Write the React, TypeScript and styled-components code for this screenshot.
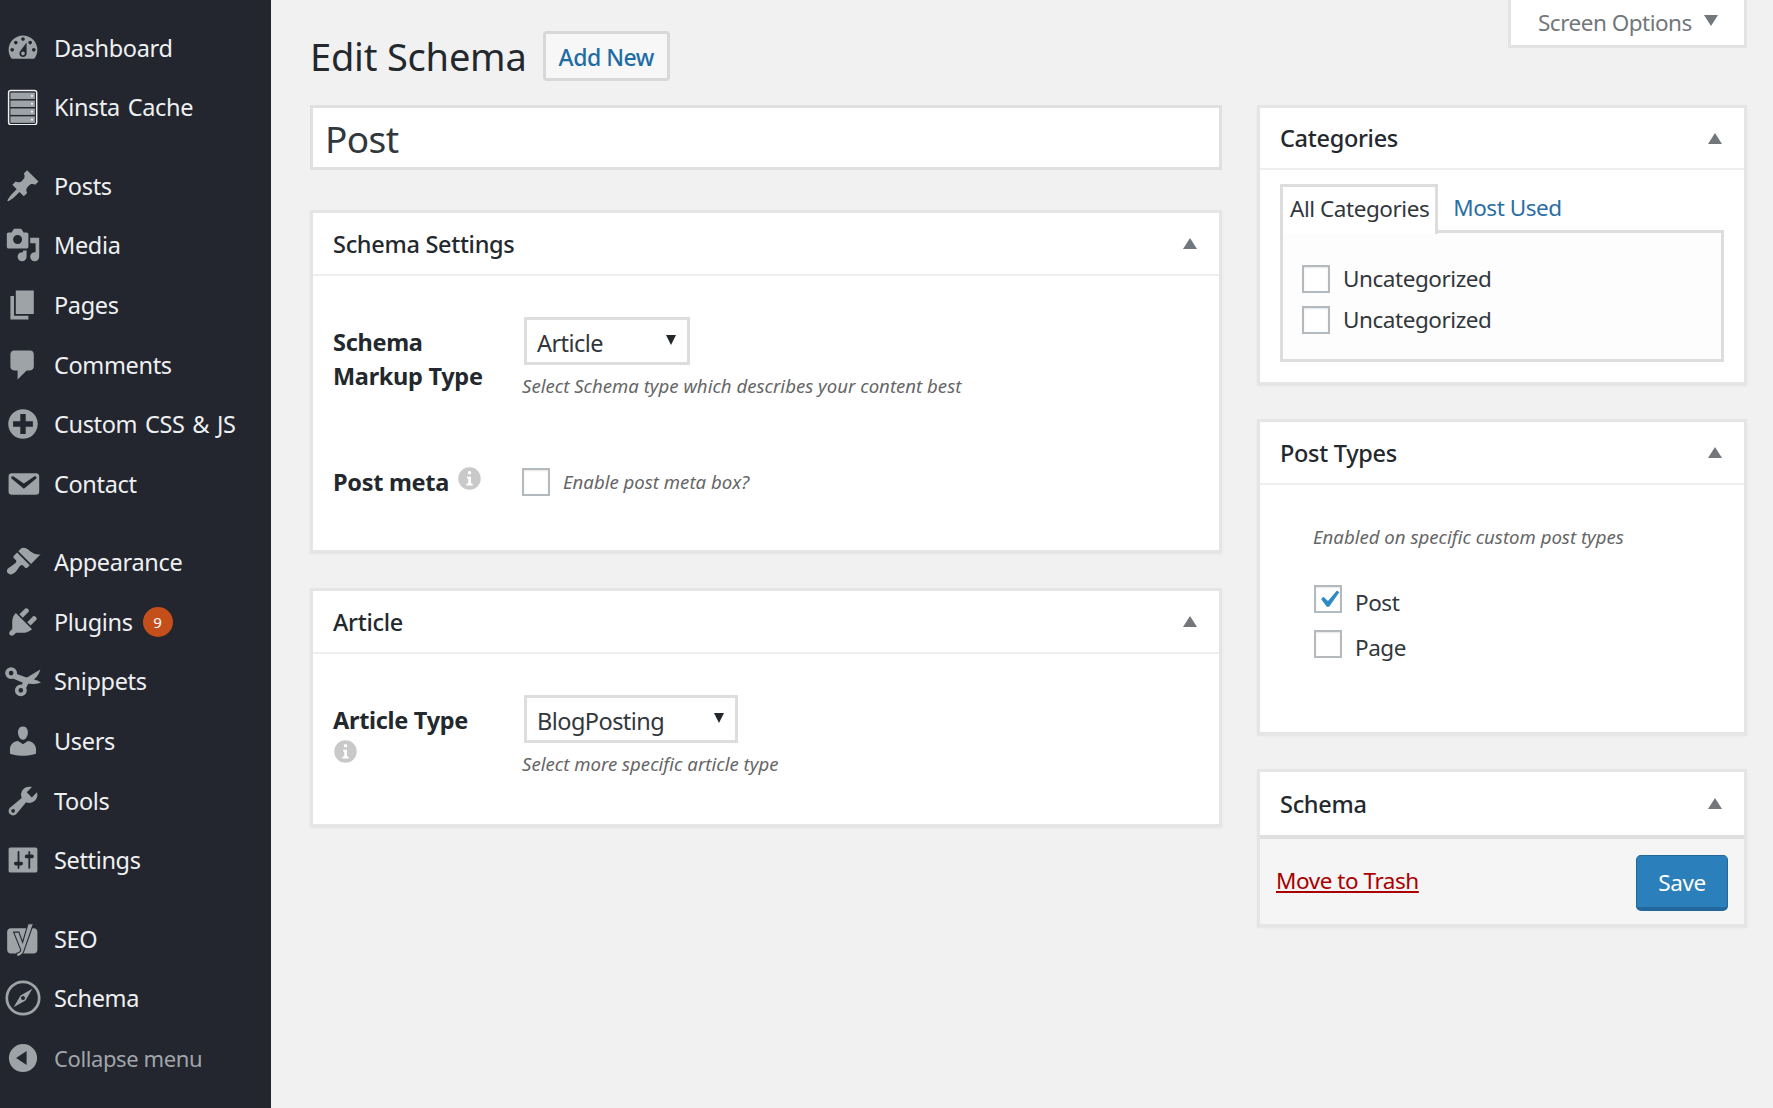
import { FC, ReactNode } from "react";
import styled, { createGlobalStyle } from "styled-components";

const GlobalStyle = createGlobalStyle`
  html, body {
    margin: 0;
    padding: 0;
    height: 100%;
    overflow: hidden;
    background: #f1f1f1;
    font-family: "Noto Sans", "Open Sans", sans-serif;
    color: #23282d;
  }
  * { box-sizing: border-box; }
`;

const Page = styled.div`
  display: flex;
  width: 1773px;
  height: 1108px;
  overflow: hidden;
`;

const Sidebar = styled.nav`
  flex: 0 0 271px;
  background: #23262e;
  padding-top: 18px;
`;

const MenuItem = styled.div<{ $gap?: boolean; $dim?: boolean }>`
  display: flex;
  align-items: center;
  height: 59.6px;
  margin-top: ${(p) => (p.$gap ? "18.8px" : "0")};
  color: ${(p) => (p.$dim ? "#a0a5aa" : "#eef0f2")};
  font-size: ${(p) => (p.$dim ? "22px" : "23.5px")};
  letter-spacing: ${(p) => (p.$dim ? "-0.4px" : "-0.35px")};
  word-spacing: ${(p) => (p.$dim ? "0" : "2px")};
  white-space: nowrap;
`;

const MenuIcon = styled.span`
  flex: 0 0 54px;
  display: flex;
  justify-content: center;
  padding-right: 8px;
  color: #9ea3a8;
  svg {
    display: block;
    width: 36px;
    height: 36px;
    fill: currentColor;
  }
`;

const Badge = styled.span`
  display: inline-flex;
  align-items: center;
  justify-content: center;
  width: 30px;
  height: 30px;
  margin-left: 10px;
  border-radius: 50%;
  background: #c54f1b;
  color: #fff;
  font-size: 15px;
  letter-spacing: 0;
`;

const Content = styled.main`
  flex: 1;
  padding: 0 26px 0 39px;
`;

const TopRow = styled.div`
  display: flex;
  justify-content: space-between;
  align-items: flex-start;
  height: 105px;
`;

const TitleRow = styled.div`
  display: flex;
  align-items: center;
  gap: 16px;
  padding-top: 31px;
`;

const Title = styled.h1`
  margin: 0;
  font-size: 38px;
  line-height: 48px;
  font-weight: 400;
  letter-spacing: -0.2px;
  color: #23282d;
`;

const AddNew = styled.a`
  display: flex;
  align-items: center;
  height: 50px;
  padding: 2px 13px 0;
  background: #f7f7f7;
  border: 3px solid #d8d8d8;
  border-radius: 4px;
  color: #1f6ca5;
  font-size: 23px;
  font-weight: 500;
  letter-spacing: -0.5px;
`;

const ScreenOptions = styled.div`
  display: flex;
  align-items: center;
  gap: 12px;
  width: 239px;
  height: 48px;
  padding-left: 27px;
  background: #fff;
  border: 3px solid #e3e3e3;
  border-top: 0;
  color: #72777c;
  font-size: 22.5px;
  letter-spacing: -0.5px;
`;

const OptionsArrow = styled.span`
  width: 0;
  height: 0;
  margin-bottom: 5px;
  border-left: 7px solid transparent;
  border-right: 7px solid transparent;
  border-top: 11px solid #72777c;
`;

const Columns = styled.div`
  display: flex;
  align-items: flex-start;
  gap: 35px;
`;

const MainColumn = styled.div`
  flex: 0 0 912px;
`;

const SideColumn = styled.div`
  flex: 0 0 490px;
`;

const TitleInput = styled.div`
  display: flex;
  align-items: center;
  height: 65px;
  margin-bottom: 40px;
  padding: 2px 12px 0 12px;
  background: #fff;
  border: 3px solid #e0e0e0;
  font-size: 37px;
  letter-spacing: -0.6px;
  color: #32373c;
`;

const BoxFrame = styled.section<{ $height: number; $gap?: number }>`
  display: flex;
  flex-direction: column;
  height: ${(p) => p.$height}px;
  margin-bottom: ${(p) => p.$gap ?? 35}px;
  background: #fff;
  border: 3px solid #e5e5e5;
  box-shadow: 0 1px 2px rgba(0, 0, 0, 0.06);
`;

const BoxHeader = styled.header<{ $height: number; $strong?: boolean }>`
  flex: 0 0 ${(p) => p.$height}px;
  display: flex;
  align-items: center;
  justify-content: space-between;
  padding: 0 22px 0 20px;
  border-bottom: ${(p) => (p.$strong ? "4px solid #dfdfdf" : "2px solid #eeeeee")};
  font-size: 23.5px;
  font-weight: 500;
  letter-spacing: -0.3px;
  color: #23282d;
`;

const Toggle = styled.span`
  width: 0;
  height: 0;
  border-left: 7px solid transparent;
  border-right: 7px solid transparent;
  border-bottom: 11px solid #72777c;
`;

const BoxBody = styled.div`
  flex: 1;
  display: flex;
  flex-direction: column;
  padding: 0 20px;
`;

const FieldRow = styled.div<{ $top: number }>`
  display: grid;
  grid-template-columns: 189px 1fr;
  margin-top: ${(p) => p.$top}px;
`;

const FieldLabel = styled.div<{ $pad?: number }>`
  padding-top: ${(p) => p.$pad ?? 8}px;
  font-size: 23.5px;
  font-weight: 700;
  line-height: 34px;
  letter-spacing: -0.3px;
  color: #23282d;
`;

const SelectBox = styled.div<{ $width: number }>`
  display: flex;
  align-items: center;
  justify-content: space-between;
  width: ${(p) => p.$width}px;
  height: 48px;
  margin-left: 2px;
  padding: 3px 11px 0 10px;
  background: #fff;
  border: 3px solid #dddddd;
  font-size: 23.5px;
  letter-spacing: -0.55px;
  color: #32373c;
`;

const SelectArrow = styled.span`
  width: 0;
  height: 0;
  margin-bottom: 6px;
  border-left: 5px solid transparent;
  border-right: 5px solid transparent;
  border-top: 10px solid #23282d;
`;

const Hint = styled.p<{ $indent?: number; $top?: number }>`
  margin: ${(p) => p.$top ?? 8}px 0 0;
  padding-left: ${(p) => p.$indent ?? 0}px;
  font-size: 18.6px;
  line-height: 26px;
  font-style: italic;
  color: #666;
`;

const CheckRow = styled.label`
  display: flex;
  align-items: center;
  gap: 13px;
`;

const CheckBox = styled.span`
  flex: 0 0 28px;
  display: flex;
  align-items: center;
  justify-content: center;
  width: 28px;
  height: 28px;
  background: #fff;
  border: 2.5px solid #b4b9be;
  box-shadow: inset 0 1px 2px rgba(0, 0, 0, 0.1);
  svg {
    display: block;
    flex: none;
    width: 35px;
    height: 35px;
    fill: #2e8bc6;
  }
`;

const CheckText = styled.span<{ $drop?: number }>`
  padding-top: ${(p) => p.$drop ?? 0}px;
  font-size: 22.5px;
  letter-spacing: -0.45px;
  color: #32373c;
`;

const InfoIcon = styled.svg<{ $block?: boolean }>`
  display: ${(p) => (p.$block ? "block" : "inline-block")};
  width: 25px;
  height: 25px;
  margin: ${(p) => (p.$block ? "2px 0 0" : "0 0 0 8px")};
  vertical-align: 0;
  fill: #c9c9c9;
`;

const Tabs = styled.div`
  display: flex;
  align-items: stretch;
  height: 46px;
  margin-top: 14px;
`;

const ActiveTab = styled.div`
  display: flex;
  align-items: center;
  position: relative;
  z-index: 1;
  height: 50px;
  padding: 0 6px 4px 7px;
  background: #fff;
  border: 3px solid #dddddd;
  border-bottom: 0;
  font-size: 22.5px;
  letter-spacing: -0.45px;
  color: #32373c;
`;

const PlainTab = styled.a`
  display: flex;
  align-items: center;
  padding: 0 0 0 15px;
  font-size: 22.5px;
  letter-spacing: -0.45px;
  color: #2a6ea4;
`;

const TabPanel = styled.div`
  display: flex;
  flex-direction: column;
  gap: 10px;
  height: 132px;
  padding: 30px 18px 0 19px;
  background: #fdfdfd;
  border: 3px solid #dddddd;
`;

const TypeList = styled.div`
  display: flex;
  flex-direction: column;
  gap: 7px;
  margin-top: 30px;
  padding-left: 34px;
`;

const Footer = styled.div`
  flex: 1;
  display: flex;
  align-items: center;
  justify-content: space-between;
  padding: 2px 16px 0 16px;
  background: #f5f5f5;
`;

const TrashLink = styled.a`
  margin-bottom: 5px;
  color: #a00;
  font-size: 22.5px;
  letter-spacing: -0.45px;
  text-decoration: underline;
`;

const SaveButton = styled.button`
  width: 92px;
  height: 56px;
  padding: 3px 0 0;
  background: #2b7fba;
  border: 1px solid #23679b;
  border-bottom-width: 4px;
  border-radius: 5px;
  color: #fff;
  font-family: inherit;
  font-size: 22.5px;
  letter-spacing: -0.45px;
`;

const Icon: FC<{ d: string }> = ({ d }) => (
  <svg viewBox="0 0 20 20">
    <path d={d} />
  </svg>
);

const CacheIcon = () => (
  <svg viewBox="0 0 20 20">
    <rect x="2" y="0.8" width="15.6" height="19" rx="1.2" fill="none" stroke="#eef0f2" strokeWidth="0.8" />
    <rect x="3" y="2" width="13.6" height="3.6" />
    <rect x="3" y="6.4" width="13.6" height="3.6" />
    <rect x="3" y="10.8" width="13.6" height="3.6" />
    <rect x="3" y="15.2" width="13.6" height="3.6" />
    <circle cx="15" cy="3.8" r="0.6" fill="#eef0f2" />
    <circle cx="15" cy="8.2" r="0.6" fill="#eef0f2" />
    <circle cx="15" cy="12.6" r="0.6" fill="#eef0f2" />
    <circle cx="15" cy="17" r="0.6" fill="#eef0f2" />
  </svg>
);

const ScissorsIcon = () => (
  <svg viewBox="0 0 20 20">
    <circle cx="3.4" cy="5.6" r="2.3" fill="none" stroke="currentColor" strokeWidth="2" />
    <circle cx="8.8" cy="15.2" r="2.3" fill="none" stroke="currentColor" strokeWidth="2" />
    <path d="M9 13 10.600 9 19.600 3.600C19 6.800 16.400 9.400 13.200 10.800L11.600 14.200z" />
    <path d="M5 5.600 12 8C15 8.900 18 9.200 20 10.800 16.500 12 13 11.700 10 11L4.400 8.600z" />
  </svg>
);

const YoastIcon = () => (
  <svg viewBox="0 0 20 20">
    <rect x="1.2" y="4" width="16.800" height="14" rx="2.200" />
    <path
      d="M4.800 6.200h2.900l2.100 5.600L12.800 1.500h3L10.400 17c-.7 1.800-1.800 2.600-3.900 2.800v-1.900c1.200-.1 1.800-.5 2.300-1.700z"
      stroke="#23262e"
      strokeWidth="0.6"
    />
  </svg>
);

const CompassIcon = () => (
  <svg viewBox="0 0 20 20">
    <circle cx="10" cy="10" r="9" fill="none" stroke="currentColor" strokeWidth="1.500" />
    <path d="M15.200 4.800 11.400 11.400 4.800 15.200 8.600 8.600zM10 8.900a1.100 1.100 0 1 0 .01 0z" fillRule="evenodd" />
  </svg>
);

const Info: FC<{ block?: boolean }> = ({ block }) => (
  <InfoIcon $block={block} viewBox="0 0 20 20">
    <path d="M10 1a9 9 0 1 0 0 18 9 9 0 0 0 0-18zm0 3a1.400 1.400 0 1 1 0 2.800A1.400 1.400 0 0 1 10 4zM8 8.500h3.200V14H12.500v1.500h-5V14H9V10H8z" fillRule="evenodd" />
  </InfoIcon>
);

const Check: FC<{ checked?: boolean }> = ({ checked }) => (
  <CheckBox>
    {checked && (
      <svg viewBox="0 0 20 20">
        <path d="M14.830 4.890l1.340.940-5.810 8.380H9.020L5.780 9.670l1.340-1.250 2.570 2.400z" />
      </svg>
    )}
  </CheckBox>
);

const Box: FC<{
  title: string;
  height: number;
  header: number;
  gap?: number;
  strong?: boolean;
  children: ReactNode;
}> = ({ title, height, header, gap, strong, children }) => (
  <BoxFrame $height={height} $gap={gap}>
    <BoxHeader $height={header} $strong={strong}>
      {title}
      <Toggle />
    </BoxHeader>
    {children}
  </BoxFrame>
);

const menu: { label: string; icon: ReactNode; gap?: boolean; dim?: boolean; badge?: string }[] = [
  {
    label: "Dashboard",
    icon: <Icon d="M3.760 16h12.480c1.100-1.370 1.760-3.110 1.760-5 0-4.420-3.580-8-8-8s-8 3.580-8 8c0 1.890.660 3.630 1.760 5zM10 4c.550 0 1 .450 1 1s-.450 1-1 1-1-.450-1-1 .450-1 1-1zM6 6c.550 0 1 .450 1 1s-.450 1-1 1-1-.450-1-1 .450-1 1-1zm8 0c.550 0 1 .450 1 1s-.450 1-1 1-1-.450-1-1 .450-1 1-1zm-5.370 5.550L12 7v6c0 1.100-.900 2-2 2s-2-.900-2-2c0-.570.240-1.080.630-1.450zM4 10c.550 0 1 .450 1 1s-.450 1-1 1-1-.450-1-1 .450-1 1-1zm12 0c.550 0 1 .450 1 1s-.450 1-1 1-1-.450-1-1 .450-1 1-1zm-5 3c0-.550-.450-1-1-1s-1 .450-1 1 .450 1 1 1 1-.450 1-1z" />,
  },
  { label: "Kinsta Cache", icon: <CacheIcon /> },
  {
    label: "Posts",
    gap: true,
    icon: <Icon d="M10.440 3.020l1.820-1.820 6.360 6.350-1.830 1.820c-1.050-.680-2.480-.570-3.410.360l-.750.750c-.920.930-1.040 2.350-.350 3.410l-1.830 1.820-2.410-2.410-2.800 2.790c-.420.420-3.380 2.710-3.800 2.290s1.860-3.390 2.280-3.810l2.790-2.790L4.100 9.360l1.830-1.820c1.050.690 2.480.570 3.400-.360l.750-.750c.930-.920 1.050-2.350.360-3.410z" />,
  },
  {
    label: "Media",
    icon: <Icon d="M13 11V4c0-.550-.450-1-1-1h-1.670L9 1H5L3.670 3H2c-.550 0-1 .450-1 1v7c0 .550.450 1 1 1h10c.550 0 1-.450 1-1zM7 4.500c1.380 0 2.500 1.120 2.500 2.500S8.380 9.500 7 9.500 4.500 8.380 4.500 7 5.620 4.500 7 4.500zM14 6h5v10.500c0 1.380-1.120 2.500-2.500 2.500S14 17.880 14 16.500s1.120-2.500 2.500-2.500c.170 0 .340.020.500.050V9h-3V6zm-4 8.050V13h2v3.500c0 1.380-1.120 2.500-2.500 2.500S7 17.880 7 16.500 8.120 14 9.500 14c.170 0 .340.020.500.050z" />,
  },
  { label: "Pages", icon: <Icon d="M6 15V2h10v13H6zm-1 1h8v2H3V5h2v11z" /> },
  {
    label: "Comments",
    icon: <Icon d="M5 2h9c1.100 0 2 .900 2 2v7c0 1.100-.900 2-2 2h-2l-5 5v-5H5c-1.100 0-2-.900-2-2V4c0-1.100.900-2 2-2z" />,
  },
  {
    label: "Custom CSS & JS",
    icon: <Icon d="M15.800 4.200c3.200 3.210 3.200 8.390 0 11.600-3.210 3.200-8.390 3.200-11.600 0C1 12.590 1 7.410 4.200 4.200 7.410 1 12.590 1 15.800 4.200zm-4.300 11.300v-4h4v-3h-4v-4h-3v4h-4v3h4v4h3z" />,
  },
  {
    label: "Contact",
    icon: <Icon d="M3.870 4h13.250C18.370 4 19 4.590 19 5.790v8.420c0 1.190-.630 1.790-1.880 1.790H3.870c-1.250 0-1.880-.600-1.880-1.790V5.790c0-1.200.630-1.790 1.880-1.790zm6.620 8.600l6.740-5.530c.240-.200.430-.660.130-1.070-.290-.410-.820-.420-1.170-.170l-5.700 3.860L4.800 5.830c-.350-.250-.880-.240-1.170.170-.300.410-.110.870.130 1.070z" />,
  },
  {
    label: "Appearance",
    gap: true,
    icon: <Icon d="M14.480 11.060L7.410 3.990l1.500-1.500c.500-.560 2.300-.470 3.510.320 1.210.800 1.430 1.280 2.910 2.100 1.180.640 2.450 1.260 4.450.850zm-.710.710L6.700 4.700 4.930 6.470c-.390.390-.390 1.020 0 1.410l1.060 1.060c.390.390.390 1.030 0 1.420-.600.600-1.430 1.110-2.210 1.690-.350.260-.700.530-1.010.840C1.430 13.230.400 14.980 1.700 16.280c1.300 1.300 3.040.270 4.370-1.070.310-.310.580-.660.850-1.010.570-.780 1.080-1.610 1.690-2.210.390-.390 1.020-.390 1.410 0l1.060 1.060c.390.390 1.020.390 1.410 0z" />,
  },
  {
    label: "Plugins",
    badge: "9",
    icon: <Icon d="M13.110 4.360L9.870 7.600 8 5.730l3.240-3.240c.350-.340 1.050-.200 1.560.320.520.510.660 1.210.310 1.550zm-8 1.770l.910-1.120 9.010 9.010-1.190.840c-.710.710-2.630 1.160-3.820 1.160H6.140L4.900 17.260c-.590.590-1.540.590-2.120 0-.590-.580-.590-1.530 0-2.120l1.240-1.240v-3.880c0-1.130.400-3.190 1.090-3.890zm7.260 3.970l3.240-3.240c.340-.350 1.040-.210 1.550.310.520.510.660 1.210.31 1.550l-3.240 3.250z" />,
  },
  { label: "Snippets", icon: <ScissorsIcon /> },
  {
    label: "Users",
    icon: <Icon d="M10 9.250c-2.270 0-2.730-3.440-2.730-3.440C7 4.020 7.820 2 9.970 2c2.160 0 2.980 2.020 2.710 3.810 0 0-.410 3.440-2.680 3.440zm0 2.570L12.720 10c2.390 0 4.520 2.330 4.520 4.530v2.490s-3.650 1.130-7.240 1.130c-3.650 0-7.240-1.130-7.240-1.130v-2.490c0-2.250 1.940-4.480 4.470-4.480z" />,
  },
  {
    label: "Tools",
    icon: <Icon d="M16.680 9.770c-1.340 1.340-3.300 1.670-4.950.990l-5.410 6.520c-.990.990-2.590.990-3.580 0s-.990-2.590 0-3.570l6.520-5.420c-.680-1.650-.350-3.610.990-4.950 1.280-1.280 3.120-1.620 4.720-1.060l-2.890 2.890 2.820 2.820 2.860-2.870c.530 1.580.180 3.390-1.080 4.650zM3.810 16.210c.400.390 1.040.390 1.430 0 .400-.400.400-1.040 0-1.430-.390-.400-1.030-.400-1.430 0-.390.390-.390 1.030 0 1.430z" />,
  },
  {
    label: "Settings",
    icon: <Icon d="M18 16V4c0-.550-.450-1-1-1H3c-.550 0-1 .450-1 1v12c0 .550.450 1 1 1h14c.550 0 1-.450 1-1zM8 11h1c.550 0 1 .450 1 1s-.450 1-1 1H8v1.500c0 .280-.220.500-.500.500s-.500-.220-.500-.500V13H6c-.550 0-1-.450-1-1s.450-1 1-1h1V5.500c0-.280.220-.500.500-.500s.500.220.500.500V11zm5-2h-1c-.550 0-1-.450-1-1s.450-1 1-1h1V5.500c0-.280.220-.500.500-.500s.500.220.500.500V7h1c.550 0 1 .450 1 1s-.450 1-1 1h-1v5.500c0 .280-.220.500-.500.500s-.500-.220-.500-.500V9z" />,
  },
  { label: "SEO", gap: true, icon: <YoastIcon /> },
  { label: "Schema", icon: <CompassIcon /> },
  {
    label: "Collapse menu",
    dim: true,
    icon: <Icon d="M10 2.160c4.330 0 7.840 3.510 7.840 7.840s-3.510 7.840-7.840 7.840S2.160 14.330 2.160 10 5.710 2.160 10 2.160zm2 11.720V6.120L6.180 9.970z" />,
  },
];

export default function App() {
  return (
    <Page>
      <GlobalStyle />
      <Sidebar>
        {menu.map((item) => (
          <MenuItem key={item.label} $gap={item.gap} $dim={item.dim}>
            <MenuIcon>{item.icon}</MenuIcon>
            {item.label}
            {item.badge && <Badge>{item.badge}</Badge>}
          </MenuItem>
        ))}
      </Sidebar>
      <Content>
        <TopRow>
          <TitleRow>
            <Title>Edit Schema</Title>
            <AddNew>Add New</AddNew>
          </TitleRow>
          <ScreenOptions>
            Screen Options
            <OptionsArrow />
          </ScreenOptions>
        </TopRow>
        <Columns>
          <MainColumn>
            <TitleInput>Post</TitleInput>
            <Box title="Schema Settings" height={343} header={63}>
              <BoxBody>
                <FieldRow $top={41}>
                  <FieldLabel>
                    Schema
                    <br />
                    Markup Type
                  </FieldLabel>
                  <div>
                    <SelectBox $width={166}>
                      Article
                      <SelectArrow />
                    </SelectBox>
                    <Hint>Select Schema type which describes your content best</Hint>
                  </div>
                </FieldRow>
                <FieldRow $top={66}>
                  <FieldLabel $pad={0}>
                    Post meta
                    <Info />
                  </FieldLabel>
                  <CheckRow>
                    <Check />
                    <Hint $top={0}>Enable post meta box?</Hint>
                  </CheckRow>
                </FieldRow>
              </BoxBody>
            </Box>
            <Box title="Article" height={239} header={63}>
              <BoxBody>
                <FieldRow $top={41}>
                  <FieldLabel>
                    Article Type
                    <Info block />
                  </FieldLabel>
                  <div>
                    <SelectBox $width={214}>
                      BlogPosting
                      <SelectArrow />
                    </SelectBox>
                    <Hint>Select more specific article type</Hint>
                  </div>
                </FieldRow>
              </BoxBody>
            </Box>
          </MainColumn>
          <SideColumn>
            <Box title="Categories" height={280} header={62} gap={34}>
              <BoxBody>
                <Tabs>
                  <ActiveTab>All Categories</ActiveTab>
                  <PlainTab>Most Used</PlainTab>
                </Tabs>
                <TabPanel>
                  <CheckRow>
                    <Check />
                    <CheckText>Uncategorized</CheckText>
                  </CheckRow>
                  <CheckRow>
                    <Check />
                    <CheckText>Uncategorized</CheckText>
                  </CheckRow>
                </TabPanel>
              </BoxBody>
            </Box>
            <Box title="Post Types" height={316} header={63} gap={34}>
              <BoxBody>
                <Hint $indent={33} $top={39}>
                  Enabled on specific custom post types
                </Hint>
                <TypeList>
                  <CheckRow>
                    <Check checked />
                    <CheckText $drop={7}>Post</CheckText>
                  </CheckRow>
                  <CheckRow>
                    <Check />
                    <CheckText $drop={7}>Page</CheckText>
                  </CheckRow>
                </TypeList>
              </BoxBody>
            </Box>
            <Box title="Schema" height={158} header={67} gap={0} strong>
              <Footer>
                <TrashLink>Move to Trash</TrashLink>
                <SaveButton>Save</SaveButton>
              </Footer>
            </Box>
          </SideColumn>
        </Columns>
      </Content>
    </Page>
  );
}
